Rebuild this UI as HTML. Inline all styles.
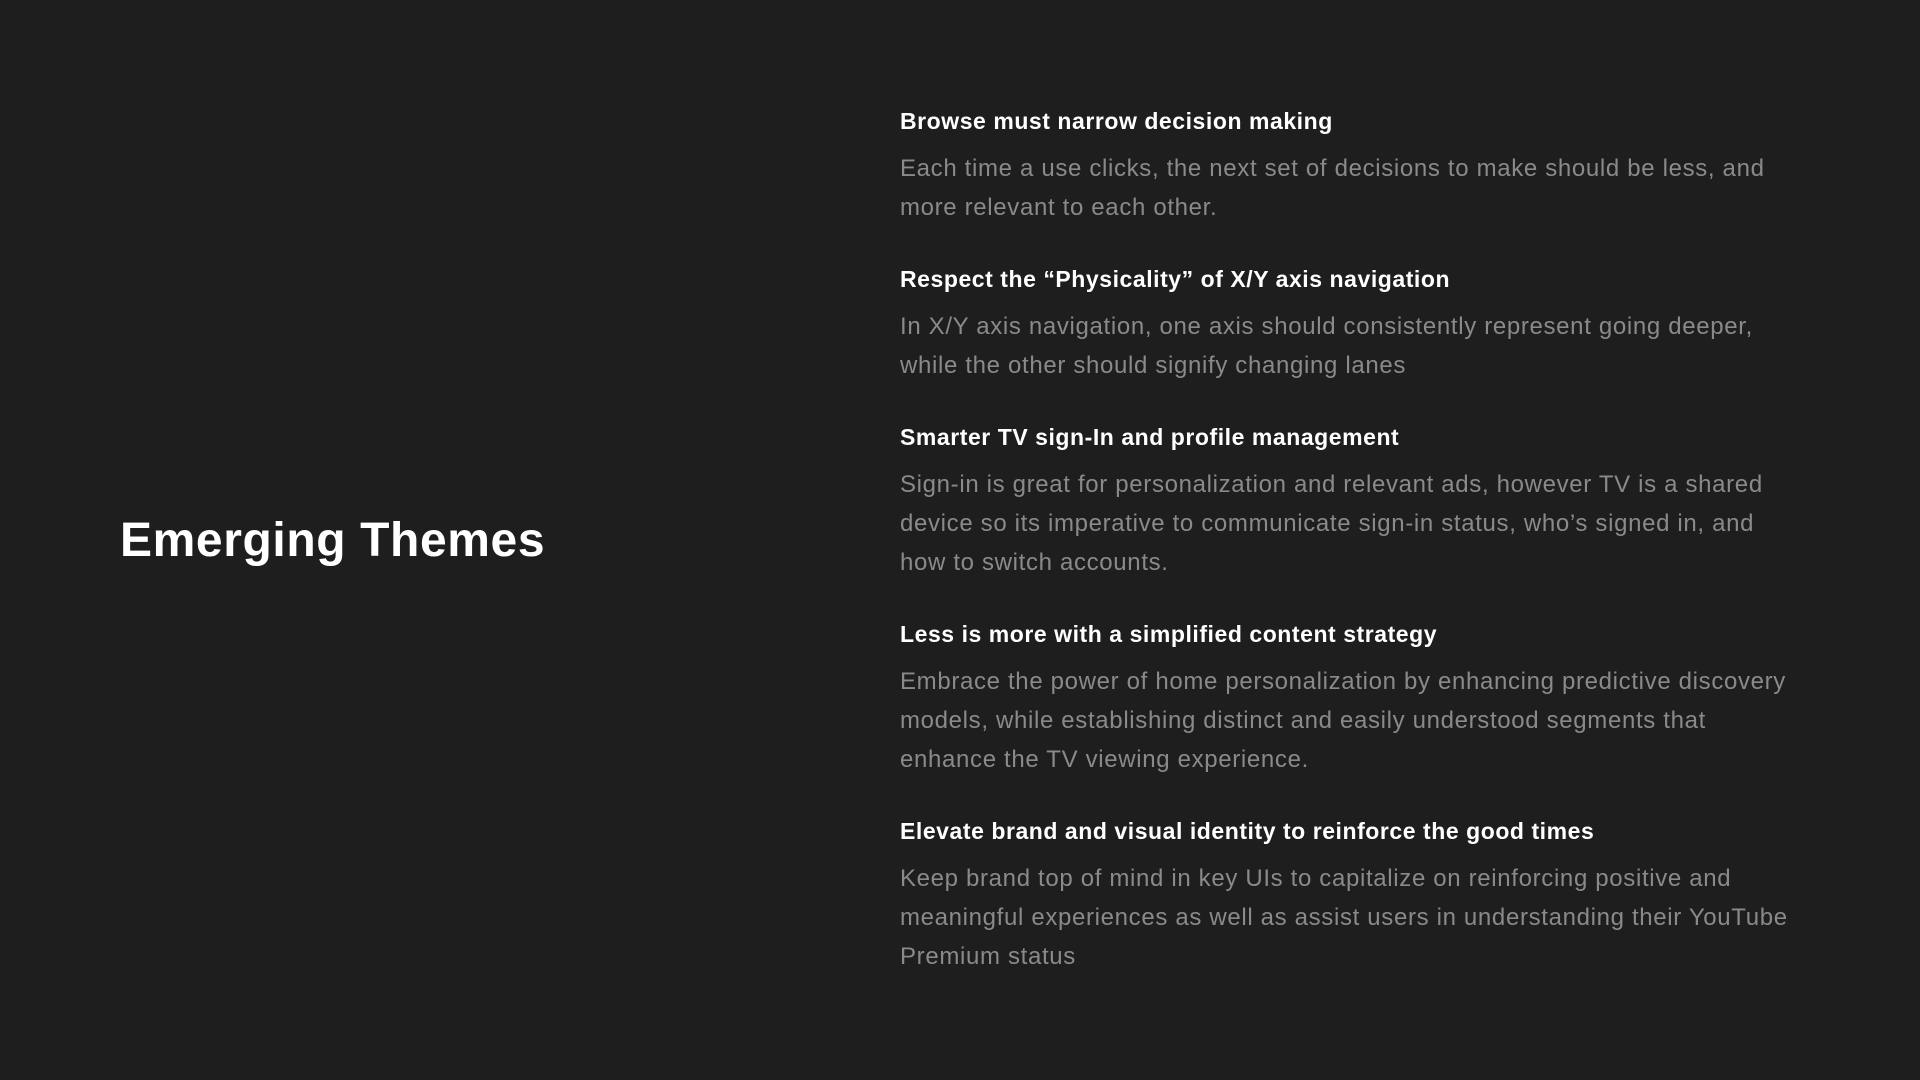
<!DOCTYPE html>
<html><head><meta charset="utf-8"><style>
html,body{margin:0;padding:0;width:1920px;height:1080px;background:#1e1e1e;overflow:hidden;font-family:"Liberation Sans",Arial,sans-serif;}
h1{position:absolute;left:120px;top:511px;margin:0;font-size:48px;line-height:60px;font-weight:bold;color:#fff;letter-spacing:0.6px;}
.col{position:absolute;left:900px;top:106px;width:1010px;}
.b h2{margin:0;font-size:23px;line-height:30px;font-weight:bold;color:#fff;letter-spacing:0.55px;}
.b p{margin:12.5px 0 37.5px;font-size:24px;line-height:39px;color:#8a8a8a;letter-spacing:0.66px;}
</style></head><body>
<h1>Emerging Themes</h1>
<div class="col">
<div class="b"><h2>Browse must narrow decision making</h2><p>Each time a use clicks, the next set of decisions to make should be less, and<br>more relevant to each other.</p></div>
<div class="b"><h2>Respect the “Physicality” of X/Y axis navigation</h2><p>In X/Y axis navigation, one axis should consistently represent going deeper,<br>while the other should signify changing lanes</p></div>
<div class="b"><h2>Smarter TV sign-In and profile management</h2><p>Sign-in is great for personalization and relevant ads, however TV is a shared<br>device so its imperative to communicate sign-in status, who’s signed in, and<br>how to switch accounts.</p></div>
<div class="b"><h2>Less is more with a simplified content strategy</h2><p>Embrace the power of home personalization by enhancing predictive discovery<br>models, while establishing distinct and easily understood segments that<br>enhance the TV viewing experience.</p></div>
<div class="b"><h2>Elevate brand and visual identity to reinforce the good times</h2><p>Keep brand top of mind in key UIs to capitalize on reinforcing positive and<br>meaningful experiences as well as assist users in understanding their YouTube<br>Premium status</p></div>
</div>
</body></html>
